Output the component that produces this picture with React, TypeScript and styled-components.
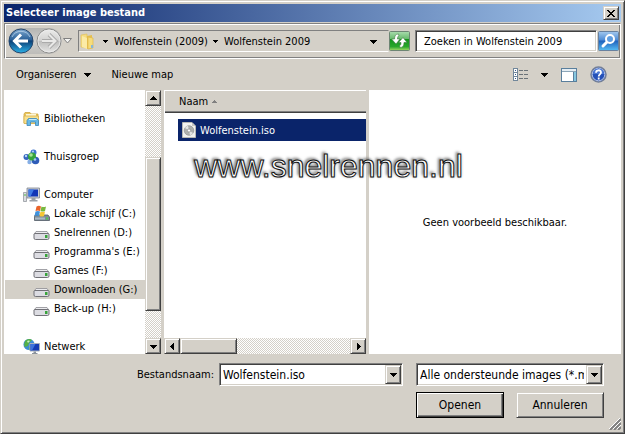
import React from "react";
import styled, { createGlobalStyle, css } from "styled-components";

const face = "#d4d0c8";
const shade = "#808080";
const dark = "#404040";
const navy = "#0a246a";

const GlobalStyle = createGlobalStyle`
  * { box-sizing: border-box; }
  body { margin: 0; background: ${face}; }
  body, button, input, select {
    font-family: "DejaVu Sans Condensed", "Noto Sans", sans-serif;
    font-size: 11px;
    color: #000;
  }
  button { padding: 0; margin: 0; border: 0; background: none; }
  svg { display: block; flex: none; }
`;

const raised = css`
  background: ${face};
  border: 1px solid;
  border-color: ${face} ${dark} ${dark} ${face};
  box-shadow: inset 1px 1px #fff, inset -1px -1px ${shade};
`;

const sunken = css`
  background: #fff;
  border: 1px solid;
  border-color: ${shade} #fff #fff ${shade};
  box-shadow: inset 1px 1px ${dark}, inset -1px -1px ${face};
`;

const Dialog = styled.main`
  ${raised}
  position: relative;
  display: flex;
  flex-direction: column;
  height: 100vh;
  padding: 3px;
  overflow: hidden;
`;

const TitleBar = styled.header`
  display: flex;
  align-items: center;
  justify-content: space-between;
  flex: none;
  height: 18px;
  padding: 0 2px;
  margin-bottom: 1px;
  background: linear-gradient(90deg, ${navy}, #a6caf0);
`;

const Title = styled.h1`
  margin: 0;
  font-size: 11px;
  line-height: 18px;
  color: #fff;
`;

const CloseButton = styled.button`
  ${raised}
  display: grid;
  place-items: center;
  width: 16px;
  height: 14px;
`;

const NavBand = styled.nav`
  display: flex;
  align-items: center;
  flex: none;
  height: 36px;
  padding: 0 1px 0 3px;
  border: 1px solid;
  border-color: ${shade} #fff #fff ${shade};
  box-shadow: inset 1px 1px #fff, inset -1px -1px ${shade};
`;

const Travel = styled.div`
  display: flex;
  align-items: center;
  width: 54px;
  height: 26px;
  border-radius: 13px;
  background: linear-gradient(#b4b4b2, #d0cfcc 50%, #bdbcb9);
`;

const TravelButton = styled.button`
  width: 27px;
  height: 26px;
`;

const HistoryButton = styled.button`
  width: 16px;
  height: 20px;
  padding-left: 1px;
`;

const AddressBar = styled.div`
  display: flex;
  align-items: center;
  flex: 1 1 311px;
  min-width: 0;
  height: 22px;
  padding-left: 1px;
  border: 1px solid;
  border-color: ${shade} transparent #fff ${shade};
`;

const Crumbs = styled.div`
  display: flex;
  min-width: 0;
  margin-left: 3px;
`;

const Crumb = styled.button`
  display: flex;
  align-items: center;
  gap: 6px;
  height: 20px;
  padding-left: 5px;
  white-space: nowrap;
`;

const AddressDrop = styled.button`
  margin-left: auto;
  padding: 0 11px;
  height: 20px;
`;

const IconButton = styled.button`
  flex: none;
  width: 21px;
  height: 20px;
`;

const SearchInput = styled.input`
  ${sunken}
  flex: 1 1 182px;
  min-width: 0;
  height: 22px;
  margin: 0 1px 0 5px;
  padding: 0 8px;
  border-radius: 0;
  outline: 0;
  &::placeholder { color: #000; opacity: 1; }
`;

const CommandBar = styled.div`
  display: flex;
  align-items: center;
  flex: none;
  height: 31px;
  padding: 0 14px 0 12px;
`;

const Command = styled.button`
  display: flex;
  align-items: center;
  gap: 8px;
  height: 20px;
  margin-right: 20px;
`;

const ViewTools = styled.div`
  display: flex;
  align-items: center;
  gap: 13px;
  margin-left: auto;
`;

const Panes = styled.div`
  position: relative;
  display: grid;
  grid-template-columns: 157px minmax(0, 202fr) minmax(0, 252fr);
  gap: 3px;
  flex: 1;
  min-height: 0;
`;

const TreePane = styled.section`
  display: flex;
  min-height: 0;
  background: #fff;
`;

const Tree = styled.ul`
  flex: 1;
  min-width: 0;
  margin: 0;
  padding: 19px 0 0 1px;
  list-style: none;
  overflow: hidden;
`;

const TreeRow = styled.li<{ $nested?: boolean; $selected?: boolean; $spaced?: boolean }>`
  display: flex;
  align-items: center;
  gap: 4px;
  height: 19px;
  margin-bottom: ${(p) => (p.$spaced ? 19 : 0)}px;
  padding-left: ${(p) => (p.$nested ? 28 : 18)}px;
  background: ${(p) => (p.$selected ? face : "transparent")};
  white-space: nowrap;
`;

const Scroll = styled.div<{ $horizontal?: boolean }>`
  display: flex;
  flex: none;
  flex-direction: ${(p) => (p.$horizontal ? "row" : "column")};
  ${(p) => (p.$horizontal ? "height: 16px" : "width: 16px")};
  background: repeating-conic-gradient(#fff 0 25%, ${face} 0 50%) 0 0 / 2px 2px;
`;

const ScrollButton = styled.button`
  ${raised}
  display: grid;
  place-items: center;
  flex: none;
  width: 16px;
  height: 16px;
`;

const Track = styled.div<{ $before: number; $after: number; $horizontal?: boolean }>`
  display: grid;
  flex: 1;
  min-height: 0;
  min-width: 0;
  ${(p) =>
    p.$horizontal
      ? css`grid-template-columns: ${p.$before}fr 57fr ${p.$after}fr;`
      : css`grid-template-rows: ${p.$before}fr 154fr ${p.$after}fr;`}
`;

const Thumb = styled.div<{ $horizontal?: boolean }>`
  ${raised}
  ${(p) => (p.$horizontal ? "grid-column: 2" : "grid-row: 2")};
`;

const FilePane = styled.section`
  display: flex;
  flex-direction: column;
  min-height: 0;
  background: #fff;
`;

const FileTable = styled.table`
  width: 100%;
  border-collapse: collapse;
`;

const HeadCell = styled.th`
  height: 23px;
  padding: 0 0 0 15px;
  background: ${face};
  box-shadow: inset 1px 1px #fff, inset 0 -1px ${dark}, inset 0 -2px ${shade};
  font-weight: 400;
  text-align: left;
`;

const HeadLabel = styled.span`
  display: flex;
  align-items: center;
  gap: 4px;
`;

const FileCell = styled.td`
  padding: 6px 0 0 14px;
`;

const FileName = styled.span`
  display: flex;
  align-items: center;
  gap: 4px;
  height: 22px;
  padding-left: 4px;
  background: ${navy};
  color: #fff;
`;

const Filler = styled.div`
  flex: 1;
`;

const PreviewPane = styled.section`
  display: grid;
  place-items: center;
  background: #fff;
`;

const Watermark = styled.div`
  position: absolute;
  top: 76px;
  left: 0;
  right: 0;
  padding-left: 32px;
  font-family: "Liberation Sans", Arial, sans-serif;
  font-size: 32px;
  line-height: 0;
  text-align: center;
  color: #fff;
  -webkit-text-stroke: 1px #111;
  text-shadow: -2px -2px 3px #777, 0 0 3px #888;
  pointer-events: none;
`;

const Footer = styled.form`
  display: grid;
  grid-template-columns: minmax(0, 215fr) minmax(0, 184fr) minmax(0, 201fr);
  row-gap: 6px;
  align-items: center;
  flex: none;
  padding: 9px 17px 12px 0;
`;

const FieldLabel = styled.label`
  padding-right: 5px;
  text-align: right;
`;

const Combo = styled.div`
  ${sunken}
  display: flex;
  height: 23px;
  padding: 1px;
`;

const FilterCombo = styled(Combo)`
  margin-left: 13px;
`;

const NameInput = styled.input`
  flex: 1;
  min-width: 0;
  padding: 0 0 0 2px;
  border: 0;
  outline: 0;
  font-size: 12px;
`;

const FilterSelect = styled.select`
  flex: 1;
  min-width: 0;
  padding: 0 2px;
  border: 0;
  border-radius: 0;
  outline: 0;
  background: #fff;
  font-size: 12px;
  appearance: none;
  text-overflow: clip;
`;

const ComboButton = styled.button`
  ${raised}
  display: grid;
  place-items: center;
  flex: none;
  width: 16px;
`;

const ComboArrow = styled.span`
  ${raised}
  display: grid;
  place-items: center;
  flex: none;
  width: 16px;
  pointer-events: none;
`;

const Actions = styled.div`
  display: flex;
  justify-content: flex-end;
  gap: 12px;
  grid-column: 1 / -1;
`;

const ActionButton = styled.button<{ $primary?: boolean }>`
  ${raised}
  width: 88px;
  height: 26px;
  font-size: 12px;
  ${(p) =>
    p.$primary &&
    css`
      border-color: #000;
      box-shadow: inset 1px 1px #fff, inset -1px -1px ${dark}, inset -2px -2px ${shade};
    `}
`;

const Grip = styled.svg`
  position: absolute;
  right: 3px;
  bottom: 3px;
`;

type Direction = "up" | "down" | "left" | "right";
const arrowShapes: Record<Direction, string> = {
  down: "M0 2h7v1H0zM1 3h5v1H1zM2 4h3v1H2zM3 5h1v1H3z",
  up: "M3 1h1v1H3zM2 2h3v1H2zM1 3h5v1H1zM0 4h7v1H0z",
  left: "M4 0h1v7H4zM3 1h1v5H3zM2 2h1v3H2zM1 3h1v1H1z",
  right: "M2 0h1v7H2zM3 1h1v5H3zM4 2h1v3H4zM5 3h1v1H5z",
};

const Arrow = ({ to = "down" }: { to?: Direction }) => (
  <svg width="7" height="7" viewBox="0 0 7 7" shapeRendering="crispEdges" aria-hidden="true">
    <path d={arrowShapes[to]} />
  </svg>
);

const CrumbArrow = () => (
  <svg width="5" height="5" viewBox="0 0 5 5" shapeRendering="crispEdges" aria-hidden="true">
    <path d="M0 1h5v1H0zM1 2h3v1H1zM2 3h1v1H2z" />
  </svg>
);

const BackIcon = () => (
  <svg width="27" height="26" viewBox="0 0 27 26">
    <defs>
      <linearGradient id="back" x2="0" y2="1">
        <stop offset="0" stopColor="#7fa9cf" />
        <stop offset=".45" stopColor="#2a6098" />
        <stop offset=".5" stopColor="#0c4076" />
        <stop offset="1" stopColor="#2bb1e8" />
      </linearGradient>
    </defs>
    <circle cx="13" cy="13" r="12" fill="url(#back)" stroke="#27476d" />
    <path d="M4 9a10 10 0 0 1 18 0" fill="none" stroke="#b6d0e8" strokeWidth="1" opacity=".8" />
    <path d="M13 6.500L6.500 13l6.500 6.500M7 13h13" fill="none" stroke="#fff" strokeWidth="3" />
  </svg>
);

const ForwardIcon = () => (
  <svg width="27" height="26" viewBox="0 0 27 26">
    <defs>
      <linearGradient id="forward" x2="0" y2="1">
        <stop offset="0" stopColor="#ececeb" />
        <stop offset=".48" stopColor="#d2d2d1" />
        <stop offset=".5" stopColor="#bdbdbc" />
        <stop offset="1" stopColor="#e6e6e5" />
      </linearGradient>
    </defs>
    <circle cx="14" cy="13" r="12" fill="url(#forward)" stroke="#8d8d8c" />
    <circle cx="14" cy="13" r="11" fill="none" stroke="#eee" strokeWidth="1" opacity=".7" />
    <path d="M14 6.500l6.500 6.500-6.500 6.500M20 13H7" fill="none" stroke="#aaa" strokeWidth="4" />
    <path d="M14 6.500l6.500 6.500-6.500 6.500M20 13H7" fill="none" stroke="#e9e9e8" strokeWidth="2" />
  </svg>
);

const FolderIcon = () => (
  <svg width="15" height="17" viewBox="0 0 15 17">
    <path d="M1 2l6-1v14l-6-1z" fill="#f5dd81" stroke="#e2c25d" strokeWidth=".7" />
    <path d="M7 3l5-1v13l-5 1z" fill="#e5be4c" />
    <path d="M2 3l5 2v11l-5-2z" fill="#fbeba6" />
    <path d="M8 4l5 1v10l-5 1z" fill="#f6dc7b" stroke="#dfb94b" strokeWidth=".7" />
    <path d="M11 12h2v3h-2z" fill="#88b7d8" />
  </svg>
);

const RefreshIcon = () => (
  <svg width="21" height="20" viewBox="0 0 21 20">
    <defs>
      <linearGradient id="refresh" x2="0" y2="1">
        <stop offset="0" stopColor="#aadcae" />
        <stop offset=".4" stopColor="#65b96b" />
        <stop offset=".42" stopColor="#16941d" />
        <stop offset=".8" stopColor="#2aa72b" />
        <stop offset="1" stopColor="#a5dc68" />
      </linearGradient>
    </defs>
    <rect x=".5" y=".5" width="20" height="19" rx="1" fill="url(#refresh)" stroke="#6d8573" />
    <path d="M9.500 3C6.500 3 5.500 5 5.500 8H2.500l4.500 5 4-5H8.500c0-2 .5-3 1.500-3zM11 16.500c3 0 4-2 4-5h3L14 6.500l-4.500 5h2.500c0 2-.5 3-1.500 3z" fill="#fff" stroke="#397b3c" strokeWidth=".6" />
  </svg>
);

const SearchIcon = () => (
  <svg width="21" height="20" viewBox="0 0 21 20">
    <defs>
      <linearGradient id="search" x2="0" y2="1">
        <stop offset="0" stopColor="#a4c9ee" />
        <stop offset=".45" stopColor="#4d8bd5" />
        <stop offset=".5" stopColor="#1f62bd" />
        <stop offset="1" stopColor="#56bdf4" />
      </linearGradient>
    </defs>
    <rect x=".5" y=".5" width="20" height="19" rx="1" fill="url(#search)" stroke="#68819f" />
    <path d="M9 11l-4 4" stroke="#fff" strokeWidth="3" strokeLinecap="round" />
    <circle cx="12" cy="8" r="4" fill="#5f9de0" stroke="#fff" strokeWidth="2" />
  </svg>
);

const ListIcon = () => (
  <svg width="15" height="13" viewBox="0 0 15 13" shapeRendering="crispEdges">
    <rect width="5" height="13" fill="#71879b" />
    {[0, 4, 8].map((y) => (
      <g key={y}>
        <rect x="1" y={y + 1} width="3" height="3" fill="#fff" />
        <rect x="2" y={y + 2} width="1" height="1" fill="#31568c" />
        <path d={`M6 ${y + 2}h4v1H6zM11 ${y + 2}h4v1h-4z`} fill="#6a7278" />
      </g>
    ))}
  </svg>
);

const PaneIcon = () => (
  <svg width="16" height="14" viewBox="0 0 16 14" shapeRendering="crispEdges">
    <rect width="16" height="14" fill="#5a7f9d" />
    <rect x="1" y="1" width="14" height="12" fill="#fff" />
    <path d="M1 3h14v1H1z" fill="#8ca6b8" />
    <path d="M12 4h1v9h-1z" fill="#5a7f9d" />
    <path d="M13 4h2v9h-2z" fill="#86c7df" />
    <path d="M1 1h14v2H1z" fill="#e5edf3" />
  </svg>
);

const HelpIcon = () => (
  <svg width="17" height="17" viewBox="0 0 17 17">
    <circle cx="8.500" cy="8.500" r="7.500" fill="#2450b8" stroke="#737f97" strokeWidth="1.500" />
    <circle cx="8.500" cy="8.500" r="6.300" fill="none" stroke="#b5c4e6" strokeWidth="1" />
    <path d="M3 8a5.500 5.500 0 0 1 11 0z" fill="#4b78d4" />
    <path d="M6 6.700C6 3.500 11 3.500 11 6.500c0 2-2.300 1.800-2.300 4M8.700 11.500v2" fill="none" stroke="#fff" strokeWidth="1.800" />
  </svg>
);

const LibraryIcon = () => (
  <svg width="17" height="16" viewBox="0 0 17 16">
    <path d="M1 3l1-1.500h5L8 3h7v9H1z" fill="#e9c55d" stroke="#cfa63f" strokeWidth=".8" />
    <path d="M3 3h10v4H3z" fill="#fdf6d5" />
    <path d="M1 5h14.500v7.500H1z" fill="#f8e08c" stroke="#d5b04b" strokeWidth=".8" />
    <path d="M4 14.500V9.500L5.500 7.500h8L15.500 9.500v5h-3v-3.500h-5v3.500z" fill="#68b9e6" stroke="#3b87bb" strokeWidth=".8" />
    <path d="M6 8.500h7.500" stroke="#c7ebfb" />
  </svg>
);

const HomegroupIcon = () => (
  <svg width="17" height="16" viewBox="0 0 17 16">
    <circle cx="10.500" cy="3.500" r="3" fill="#3f76ce" />
    <circle cx="3.500" cy="8" r="3" fill="#3565bd" />
    <circle cx="12.500" cy="11.500" r="3.800" fill="#2e5cb8" />
    <circle cx="6.500" cy="13" r="2.200" fill="#85aee5" />
    <circle cx="9" cy="7.500" r="4" fill="#35a43c" />
    <circle cx="8" cy="6" r="1.800" fill="#a5e293" />
    <circle cx="3" cy="7" r="1.200" fill="#b7d5f7" />
    <circle cx="12" cy="10.500" r="1.300" fill="#a4c6f4" />
    <circle cx="10" cy="2.500" r="1" fill="#b4d3f8" />
  </svg>
);

const ComputerIcon = () => (
  <svg width="17" height="16" viewBox="0 0 17 16">
    <path d="M4 1h12.500v10H4z" fill="#c9ced4" stroke="#81878f" strokeWidth=".8" />
    <path d="M5.500 2.500h9.500v7H5.500z" fill="#1236b6" />
    <path d="M5.500 2.500H11L7.500 9.500h-2z" fill="#3f7be4" />
    <path d="M8.500 11h4v2h2v1.500h-8V13h2z" fill="#9aa0a7" />
    <path d="M.5 5.500h3v9h-3z" fill="#dadde0" stroke="#868c93" strokeWidth=".7" />
    <path d="M1.500 7h1v2h-1z" fill="#54bb4a" />
  </svg>
);

const DriveIcon = () => (
  <svg width="17" height="17" viewBox="0 0 17 17">
    <path d="M3 7.500h11l2 3H1z" fill="#ececef" stroke="#8d8d92" strokeWidth=".8" />
    <path d="M1 10.500q0-1 1-1h13q1 0 1 1v3.500q0 1.500-1.500 1.500h-12Q1 15.500 1 14z" fill="#dcdce2" stroke="#717177" />
    <path d="M12 11h2.500v3H12z" fill="#38a33a" />
  </svg>
);

const SystemDriveIcon = () => (
  <svg width="17" height="17" viewBox="0 0 17 17">
    <path d="M2 10h13l1.500 2v3.500h-15V12z" fill="#7d8c98" stroke="#515b64" strokeWidth=".8" />
    <path d="M2 12.500h10v2H2z" fill="#a9b9c5" />
    <path d="M13 12.500h2v2h-2z" fill="#50ca4d" />
    <path d="M3.500 1.500q2.500-1.500 4.500 0L7 6q-2-1-4.500 0z" fill="#e9632a" />
    <path d="M8.500 1.500q2 1 4.500 0L12 6q-2 1-4.500 0z" fill="#78b83f" />
    <path d="M2.500 6.500q2.500-1 4.500 0l-1 4.500q-2-1-4.500 0z" fill="#3f92dc" />
    <path d="M7.500 6.500q2 1 4.500 0l-1 4.500q-2 1-4.500 0z" fill="#f5c634" />
  </svg>
);

const NetworkIcon = () => (
  <svg width="17" height="17" viewBox="0 0 17 17">
    <circle cx="6" cy="6.500" r="5.500" fill="#3c8cd2" />
    <path d="M3 2q4-2 6 0L6 5 5 8 1.500 9q-1-4 1.500-7zM6 9l3 1-3 2z" fill="#54b044" />
    <path d="M4 3q2-1 3 0L5 5z" fill="#caefc2" />
    <path d="M7 5.500h9.500v7.500H7z" fill="#143bb4" stroke="#a8b0ba" />
    <path d="M7.500 6h5L9 12.500H7.500z" fill="#3d72dc" />
    <path d="M10.500 13.500h2.500V15h1.500v1.500H9V15h1.500z" fill="#8c949d" />
  </svg>
);

const DiscFileIcon = () => (
  <svg width="14" height="16" viewBox="0 0 14 16">
    <path d="M.5.500h9.500l3.500 3.500v11.500H.5z" fill="#f2f2ef" stroke="#b8b8b4" />
    <path d="M10 .5V4h3.500z" fill="#c5c5c1" />
    <circle cx="7" cy="8.500" r="4.800" fill="#aeb0ae" stroke="#888" strokeWidth=".6" />
    <path d="M7 8.500L3 6a5 5 0 0 1 3-2.200zM7 8.500l4 2.500a5 5 0 0 1-3 2.200z" fill="#e3e5e3" />
    <circle cx="7" cy="8.500" r="1.600" fill="#fff" stroke="#888" strokeWidth=".7" />
  </svg>
);

const treeItems = [
  { label: "Bibliotheken", icon: <LibraryIcon />, spaced: true },
  { label: "Thuisgroep", icon: <HomegroupIcon />, spaced: true },
  { label: "Computer", icon: <ComputerIcon /> },
  { label: "Lokale schijf (C:)", icon: <SystemDriveIcon />, nested: true },
  { label: "Snelrennen (D:)", icon: <DriveIcon />, nested: true },
  { label: "Programma's (E:)", icon: <DriveIcon />, nested: true },
  { label: "Games (F:)", icon: <DriveIcon />, nested: true },
  { label: "Downloaden (G:)", icon: <DriveIcon />, nested: true, selected: true },
  { label: "Back-up (H:)", icon: <DriveIcon />, nested: true, spaced: true },
  { label: "Netwerk", icon: <NetworkIcon /> },
];

export default function App() {
  return (
    <>
      <GlobalStyle />
      <Dialog>
        <TitleBar>
          <Title>Selecteer image bestand</Title>
          <CloseButton aria-label="Sluiten">
            <svg width="8" height="7" viewBox="0 0 8 7" shapeRendering="crispEdges">
              <path d="M0 0h2v1h1v1h2V1h1V0h2v1H7v1H6v1H5v1h1v1h1v1h1v1H6V6H5V5H3v1H2v1H0V6h1V5h1V4h1V3H2V2H1V1H0z" />
            </svg>
          </CloseButton>
        </TitleBar>

        <NavBand>
          <Travel>
            <TravelButton aria-label="Vorige"><BackIcon /></TravelButton>
            <TravelButton aria-label="Volgende"><ForwardIcon /></TravelButton>
          </Travel>
          <HistoryButton aria-label="Recente locaties">
            <svg width="9" height="6" viewBox="0 0 9 6">
              <path d="M.5.500h8L4.500 5z" fill="#f4f4f2" stroke="#808080" />
            </svg>
          </HistoryButton>
          <AddressBar>
            <FolderIcon />
            <Crumbs>
              <Crumb><CrumbArrow />Wolfenstein (2009)</Crumb>
              <Crumb><CrumbArrow />Wolfenstein 2009</Crumb>
            </Crumbs>
            <AddressDrop aria-label="Vorige locaties"><Arrow /></AddressDrop>
          </AddressBar>
          <IconButton aria-label="Vernieuwen"><RefreshIcon /></IconButton>
          <SearchInput aria-label="Zoeken" placeholder="Zoeken in Wolfenstein 2009" />
          <IconButton aria-label="Zoeken starten"><SearchIcon /></IconButton>
        </NavBand>

        <CommandBar>
          <Command>Organiseren<Arrow /></Command>
          <Command>Nieuwe map</Command>
          <ViewTools>
            <button aria-label="Weergave"><ListIcon /></button>
            <button aria-label="Meer opties"><Arrow /></button>
            <button aria-label="Voorbeeldvenster"><PaneIcon /></button>
            <button aria-label="Help"><HelpIcon /></button>
          </ViewTools>
        </CommandBar>

        <Panes>
          <TreePane>
            <Tree>
              {treeItems.map((item) => (
                <TreeRow key={item.label} $nested={item.nested} $selected={item.selected} $spaced={item.spaced}>
                  {item.icon}
                  {item.label}
                </TreeRow>
              ))}
            </Tree>
            <Scroll>
              <ScrollButton aria-label="Omhoog"><Arrow to="up" /></ScrollButton>
              <Track $before={51} $after={27}><Thumb /></Track>
              <ScrollButton aria-label="Omlaag"><Arrow /></ScrollButton>
            </Scroll>
          </TreePane>

          <FilePane>
            <FileTable>
              <thead>
                <tr>
                  <HeadCell scope="col">
                    <HeadLabel>
                      Naam
                      <svg width="5" height="3" viewBox="0 0 5 3" shapeRendering="crispEdges">
                        <path d="M2 0h1v1H2zM1 1h3v1H1zM0 2h5v1H0z" fill="#808080" />
                      </svg>
                    </HeadLabel>
                  </HeadCell>
                </tr>
              </thead>
              <tbody>
                <tr>
                  <FileCell><FileName><DiscFileIcon />Wolfenstein.iso</FileName></FileCell>
                </tr>
              </tbody>
            </FileTable>
            <Filler />
            <Scroll $horizontal>
              <ScrollButton aria-label="Links"><Arrow to="left" /></ScrollButton>
              <Track $horizontal $before={0} $after={113}><Thumb $horizontal /></Track>
              <ScrollButton aria-label="Rechts"><Arrow to="right" /></ScrollButton>
            </Scroll>
          </FilePane>

          <PreviewPane>Geen voorbeeld beschikbaar.</PreviewPane>
          <Watermark>www.snelrennen.nl</Watermark>
        </Panes>

        <Footer onSubmit={(e) => e.preventDefault()}>
          <FieldLabel htmlFor="filename">Bestandsnaam:</FieldLabel>
          <Combo>
            <NameInput id="filename" defaultValue="Wolfenstein.iso" />
            <ComboButton type="button" aria-label="Bestandsnamen"><Arrow /></ComboButton>
          </Combo>
          <FilterCombo>
            <FilterSelect aria-label="Bestandstype">
              <option>Alle ondersteunde images (*.mds)</option>
            </FilterSelect>
            <ComboArrow><Arrow /></ComboArrow>
          </FilterCombo>
          <Actions>
            <ActionButton $primary type="submit">Openen</ActionButton>
            <ActionButton type="button">Annuleren</ActionButton>
          </Actions>
        </Footer>
        <Grip width="12" height="12" viewBox="0 0 12 12" aria-hidden="true">
          <path d="M1 12L12 1M5 12l7-7M9 12l3-3" stroke="#808080" strokeWidth="2" />
          <path d="M0 11L11 0M4 11l8-8M8 11l4-4" stroke="#fff" />
        </Grip>
      </Dialog>
    </>
  );
}
